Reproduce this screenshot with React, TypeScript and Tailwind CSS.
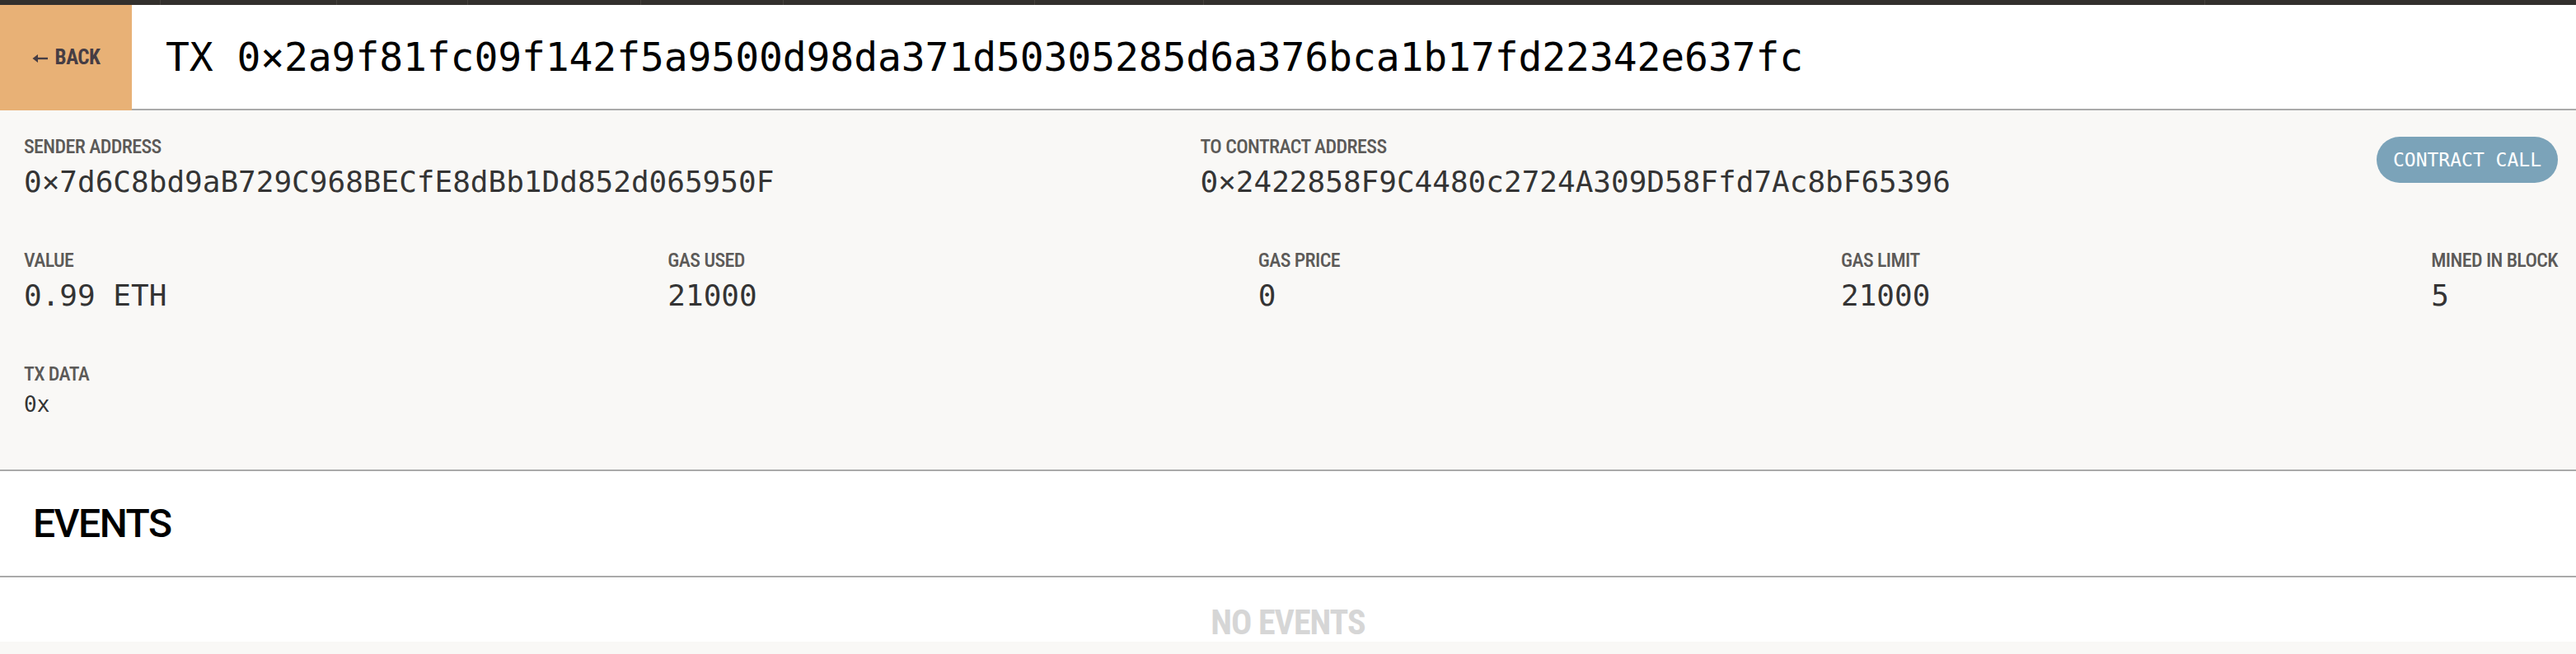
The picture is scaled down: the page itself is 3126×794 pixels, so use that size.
const mono = "font-['DejaVu_Sans_Mono','Liberation_Mono',monospace]";
const cond = "font-['Roboto_Condensed','Liberation_Sans_Narrow',Roboto,sans-serif] font-stretch-condensed";

const navStops = [195, 214, 159, 210, 173, 305, 205, 1215];

const Field = ({ label, value, small }: { label: string; value: string; small?: boolean }) => (
  <div className="flex flex-col">
    <div className={`${cond} text-[24px] leading-[28px] font-medium text-[#5c5a58] tracking-[-0.6px]`}>
      {label}
    </div>
    <div
      className={`${mono} mt-[8px] text-[#343434] ${
        small ? "text-[26px] leading-[30px]" : "text-[36px] leading-[42px]"
      }`}
    >
      {value}
    </div>
  </div>
);

export default function App() {
  return (
    <div className="min-h-screen bg-[#f9f8f6]">
      {/* top nav strip, cut off */}
      <div className="flex h-[6px] bg-[#33302d]">
        {navStops.map((w, i) => (
          <div key={i} className="h-full border-r border-[#45413d]" style={{ width: w }} />
        ))}
      </div>

      {/* header */}
      <div className="flex h-[128px] bg-white">
        <button className="flex w-[160px] items-center justify-center gap-[8px] bg-[#e8b176] text-[#463d44]">
          <svg width="20" height="12" viewBox="0 0 20 12" className="mt-[1px]">
            <path d="M19 6H6" stroke="currentColor" strokeWidth="2.4" />
            <path d="M0.5 6L7 1v10z" fill="currentColor" />
          </svg>
          <span className={`${cond} text-[25px] font-bold tracking-[-0.5px]`}>BACK</span>
        </button>
        <div className="flex flex-1 items-center border-b-2 border-[#aaaaaa] pl-[41px]">
          <h1 className={`${mono} text-[48px] leading-[56px] tracking-[-0.1px] text-black`}>
            TX 0×2a9f81fc09f142f5a9500d98da371d50305285d6a376bca1b17fd22342e637fc
          </h1>
        </div>
      </div>

      {/* details */}
      <div className="flex flex-col gap-[60px] border-b-2 border-[#aaaaaa] bg-[#f9f8f6] pt-[30px] pb-[64px] pl-[29px] pr-[22px]">
        <div className="flex items-start justify-between">
          <Field label="SENDER ADDRESS" value="0×7d6C8bd9aB729C968BECfE8dBb1Dd852d065950F" />
          <Field label="TO CONTRACT ADDRESS" value="0×2422858F9C4480c2724A309D58Ffd7Ac8bF65396" />
          <div
            className={`${mono} mt-[2px] flex h-[56px] w-[220px] items-center justify-center rounded-full bg-[#7ba3b9] text-[23px] text-white`}
          >
            CONTRACT CALL
          </div>
        </div>
        <div className="flex items-start justify-between">
          <Field label="VALUE" value="0.99 ETH" />
          <Field label="GAS USED" value="21000" />
          <Field label="GAS PRICE" value="0" />
          <Field label="GAS LIMIT" value="21000" />
          <Field label="MINED IN BLOCK" value="5" />
        </div>
        <div className="flex">
          <Field label="TX DATA" value="0x" small />
        </div>
      </div>

      {/* events */}
      <div className="flex h-[129px] items-center border-b-2 border-[#aaaaaa] bg-white px-[40px]">
        <h2 className="font-['Roboto',sans-serif] text-[48px] font-medium tracking-[-1.5px] text-black">EVENTS</h2>
      </div>
      <div className="flex h-[78px] justify-center bg-white pt-[30px]">
        <div className={`${cond} text-[42px] font-bold leading-[49px] text-[#d6d6d6] tracking-[-1px]`}>
          NO EVENTS
        </div>
      </div>
    </div>
  );
}
